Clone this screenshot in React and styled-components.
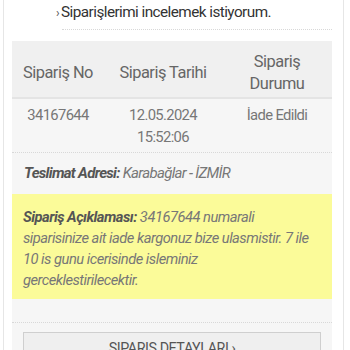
import React from "react";
import styled, { createGlobalStyle } from "styled-components";

const Global = createGlobalStyle`
  html, body { margin: 0; padding: 0; background: #ffffff; }
  body {
    font-family: Roboto, "Liberation Sans", sans-serif;
    color: #666;
  }
`;

const Frame = styled.div`
  box-sizing: border-box;
  width: 341px;
  margin-left: 3px;
  border-left: 1px solid #e6e6e6;
  border-right: 1px solid #e6e6e6;
  padding: 0 11px 0 8px;
  height: 350px;
  overflow: hidden;
`;

const TitleLink = styled.div`
  margin: 0 0 11px 50px;
  padding: 1px 0 5px;
  border-bottom: 1px dotted #d8d8d8;
  font-size: 15.3px;
  line-height: 22px;
  letter-spacing: -0.55px;
  color: #333;
  white-space: nowrap;
`;

const Chevron = styled.span`
  display: inline-block;
  margin-left: -6px;
  margin-right: 2px;
  font-size: 12px;
  color: #555;
`;

const Panel = styled.div`
  background: #f6f6f6;
`;

const Row = styled.div`
  display: grid;
  grid-template-columns: 92px 118px 110px;
  align-items: center;
  text-align: center;
  padding: ${(p) => p.$pad};
  background: ${(p) => p.$bg || "transparent"};
  border-bottom: ${(p) => p.$border};
`;

const HeadCell = styled.div`
  font-size: 16.4px;
  line-height: 22px;
  letter-spacing: -0.5px;
  color: #666;
`;

const DataCell = styled.div`
  font-size: 14.8px;
  line-height: 22px;
  letter-spacing: -0.65px;
  color: #777;
  align-self: start;
`;

const Address = styled.div`
  padding: 9px 12px 10px;
  font-size: 15px;
  line-height: 22px;
  letter-spacing: -0.7px;
  font-style: italic;
  color: #777;
`;

const Label = styled.b`
  font-weight: bold;
  color: #555;
`;

const Note = styled.div`
  background: #fbfb99;
  padding: 13px 11px 8px;
  font-size: 14.7px;
  line-height: 21px;
  letter-spacing: -0.5px;
  font-style: italic;
  color: #777;
`;

const NoteFoot = styled.div`
  height: 23px;
  border-bottom: 1px dotted #d8d8d8;
`;

const ButtonArea = styled.div`
  padding: 9px 11px 0;
`;

const DetailButton = styled.button`
  display: block;
  width: 100%;
  box-sizing: border-box;
  background: #efefef;
  border: 1px solid #cfcfcf;
  padding: 5px 0 8px;
  font-family: inherit;
  font-size: 14.3px;
  line-height: 20px;
  letter-spacing: -0.45px;
  color: #555;
  text-transform: uppercase;
  text-align: center;
`;

export default function App() {
  return (
    <>
      <Global />
      <Frame>
        <TitleLink>
          <Chevron>›</Chevron>Siparişlerimi incelemek istiyorum.
        </TitleLink>
        <Panel>
          <Row $pad="10px 0 2px" $bg="#f0f0f0" $border="2px solid #e4e4e4">
            <HeadCell>Sipariş No</HeadCell>
            <HeadCell>Sipariş Tarihi</HeadCell>
            <HeadCell>
              Sipariş
              <br />
              Durumu
            </HeadCell>
          </Row>
          <Row $pad="5px 0 4px" $border="1px dotted #d8d8d8">
            <DataCell>34167644</DataCell>
            <DataCell>
              12.05.2024
              <br />
              15:52:06
            </DataCell>
            <DataCell>İade Edildi</DataCell>
          </Row>
          <Address>
            <Label>Teslimat Adresi:</Label> Karabağlar - İZMİR
          </Address>
          <Note>
            <Label>Sipariş Açıklaması:</Label> 34167644 numarali
            <br />
            siparisinize ait iade kargonuz bize ulasmistir. 7 ile
            <br />
            10 is gunu icerisinde isleminiz
            <br />
            gerceklestirilecektir.
          </Note>
          <NoteFoot />
          <ButtonArea>
            <DetailButton>Sipariş Detayları ›</DetailButton>
          </ButtonArea>
        </Panel>
      </Frame>
    </>
  );
}
